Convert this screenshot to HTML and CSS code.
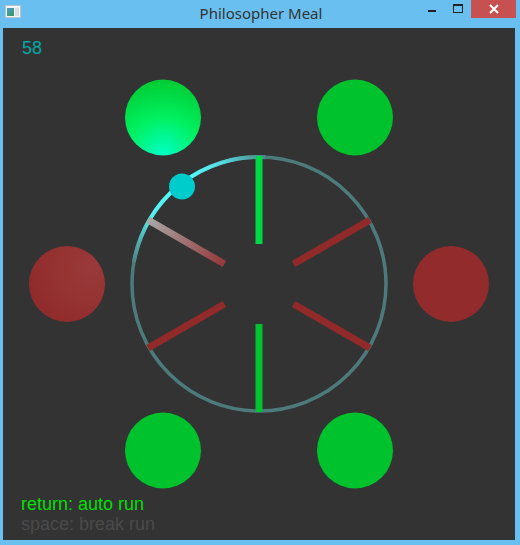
FILE: index.html
```html
<!DOCTYPE html>
<html>
<head>
<meta charset="utf-8">
<title>Philosopher Meal</title>
<link rel="stylesheet" href="styles.css">
</head>
<body>
<div class="window">
  <div class="titlebar">
    <svg class="app-icon" width="16" height="13" viewBox="0 0 16 13">
      <rect x="0.5" y="0.5" width="15" height="12" fill="#f2f4f6" stroke="#b8c4cc"/>
      <defs>
        <linearGradient id="ig" x1="0" y1="0" x2="1" y2="1">
          <stop offset="0" stop-color="#4a9ad0"/>
          <stop offset="1" stop-color="#3a9a5a"/>
        </linearGradient>
      </defs>
      <rect x="2" y="3" width="7" height="8" fill="url(#ig)"/>
      <rect x="10" y="3" width="4" height="8" fill="#d8e0e6"/>
    </svg>
    <div class="title">Philosopher Meal</div>
    <div class="controls">
      <div class="btn min"><span class="min-bar"></span></div>
      <div class="btn max"><span class="max-box"></span></div>
      <div class="btn close">
        <svg width="10" height="10" viewBox="0 0 10 10"><path d="M1 1 L9 9 M9 1 L1 9" stroke="#fff" stroke-width="2"/></svg>
      </div>
    </div>
  </div>
  <div class="content">
    <svg class="scene" width="512" height="512" viewBox="0 0 512 512">
      <defs>
        <radialGradient id="hungry" cx="0.5" cy="1" r="1">
          <stop offset="0" stop-color="#00ffc8"/>
          <stop offset="0.5" stop-color="#00f060"/>
          <stop offset="1" stop-color="#00cc33"/>
        </radialGradient>
        <radialGradient id="redL" cx="0.8" cy="0.3" r="0.9">
          <stop offset="0" stop-color="#9a3a3a"/>
          <stop offset="1" stop-color="#902a2a"/>
        </radialGradient>
        <linearGradient id="arcg" gradientUnits="userSpaceOnUse" x1="262" y1="129" x2="131" y2="240">
          <stop offset="0" stop-color="#4d8588"/>
          <stop offset="0.2" stop-color="#55d8e0"/>
          <stop offset="0.45" stop-color="#55ffff"/>
          <stop offset="0.72" stop-color="#55eef0"/>
          <stop offset="1" stop-color="#4d7b7c"/>
        </linearGradient>
        <linearGradient id="forkg" gradientUnits="userSpaceOnUse" x1="145" y1="192" x2="221" y2="236">
          <stop offset="0" stop-color="#a8a8a8"/>
          <stop offset="1" stop-color="#953838"/>
        </linearGradient>
      </defs>

      <circle cx="256" cy="256" r="127" fill="none" stroke="#4d7b7c" stroke-width="3.5"/>
      <path d="M262.6 129.2 A127 127 0 0 0 130.9 233.9" fill="none" stroke="url(#arcg)" stroke-width="4"/>

      <line x1="256" y1="216" x2="256" y2="128" stroke="#00d844" stroke-width="7"/>
      <line x1="290.6" y1="236" x2="366.9" y2="192" stroke="#922a2a" stroke-width="7"/>
      <line x1="290.6" y1="276" x2="366.9" y2="320" stroke="#922a2a" stroke-width="7"/>
      <line x1="256" y1="296" x2="256" y2="384" stroke="#00c330" stroke-width="7"/>
      <line x1="221.4" y1="276" x2="145.1" y2="320" stroke="#922a2a" stroke-width="7"/>
      <line x1="221.4" y1="236" x2="145.1" y2="192" stroke="url(#forkg)" stroke-width="7"/>

      <circle cx="160" cy="89.5" r="38" fill="url(#hungry)"/>
      <circle cx="352" cy="89.5" r="38" fill="#00c22c"/>
      <circle cx="64" cy="256" r="38" fill="url(#redL)"/>
      <circle cx="448" cy="256" r="38" fill="#922b2b"/>
      <circle cx="160" cy="422.5" r="38" fill="#00c22c"/>
      <circle cx="352" cy="422.5" r="38" fill="#00c22c"/>

      <circle cx="179" cy="158.5" r="13" fill="#00cccc"/>
    </svg>
    <div class="counter">58</div>
    <div class="help">
      <div class="help-line active">return: auto run</div>
      <div class="help-line">space: break run</div>
    </div>
  </div>
</div>
</body>
</html>
```
FILE: styles.css
```css
html, body {
  margin: 0;
  padding: 0;
  background: #68bff0;
}
.window {
  width: 520px;
  height: 545px;
  display: flex;
  flex-direction: column;
  background: #68bff0;
}
.titlebar {
  height: 28px;
  display: flex;
  align-items: flex-start;
  position: relative;
}
.app-icon {
  margin: 5px 0 0 5px;
  flex: none;
}
.title {
  position: absolute;
  left: 0;
  right: 0;
  top: 3px;
  text-align: center;
  font-family: "Noto Sans", "Open Sans", sans-serif;
  font-size: 15px;
  line-height: 20px;
  color: #333;
  padding-left: 2px;
}
.controls {
  margin-left: auto;
  margin-right: 4px;
  display: flex;
  align-items: flex-start;
  position: relative;
  z-index: 1;
}
.btn {
  height: 18px;
  display: flex;
  align-items: center;
  justify-content: center;
}
.min {
  width: 26px;
}
.min-bar {
  display: block;
  width: 8px;
  height: 2px;
  background: #222;
  margin-top: 4px;
}
.max {
  width: 26px;
}
.max-box {
  display: block;
  width: 8px;
  height: 6px;
  border: 1px solid #222;
  border-top-width: 2px;
  margin-top: -2px;
}
.close {
  width: 45px;
  background: #c75050;
}
.content {
  position: relative;
  width: 512px;
  height: 512px;
  margin: 0 0 0 3px;
  background: #333333;
  font-family: "Liberation Sans", Arial, sans-serif;
}
.scene {
  display: block;
}
.counter {
  position: absolute;
  left: 19px;
  top: 10px;
  font-size: 18px;
  line-height: 20px;
  color: #00a8a8;
}
.help {
  position: absolute;
  left: 18px;
  top: 466px;
  display: flex;
  flex-direction: column;
}
.help-line {
  font-size: 18px;
  line-height: 20px;
  color: #4a4a4a;
}
.help-line.active {
  color: #00e000;
}
```
